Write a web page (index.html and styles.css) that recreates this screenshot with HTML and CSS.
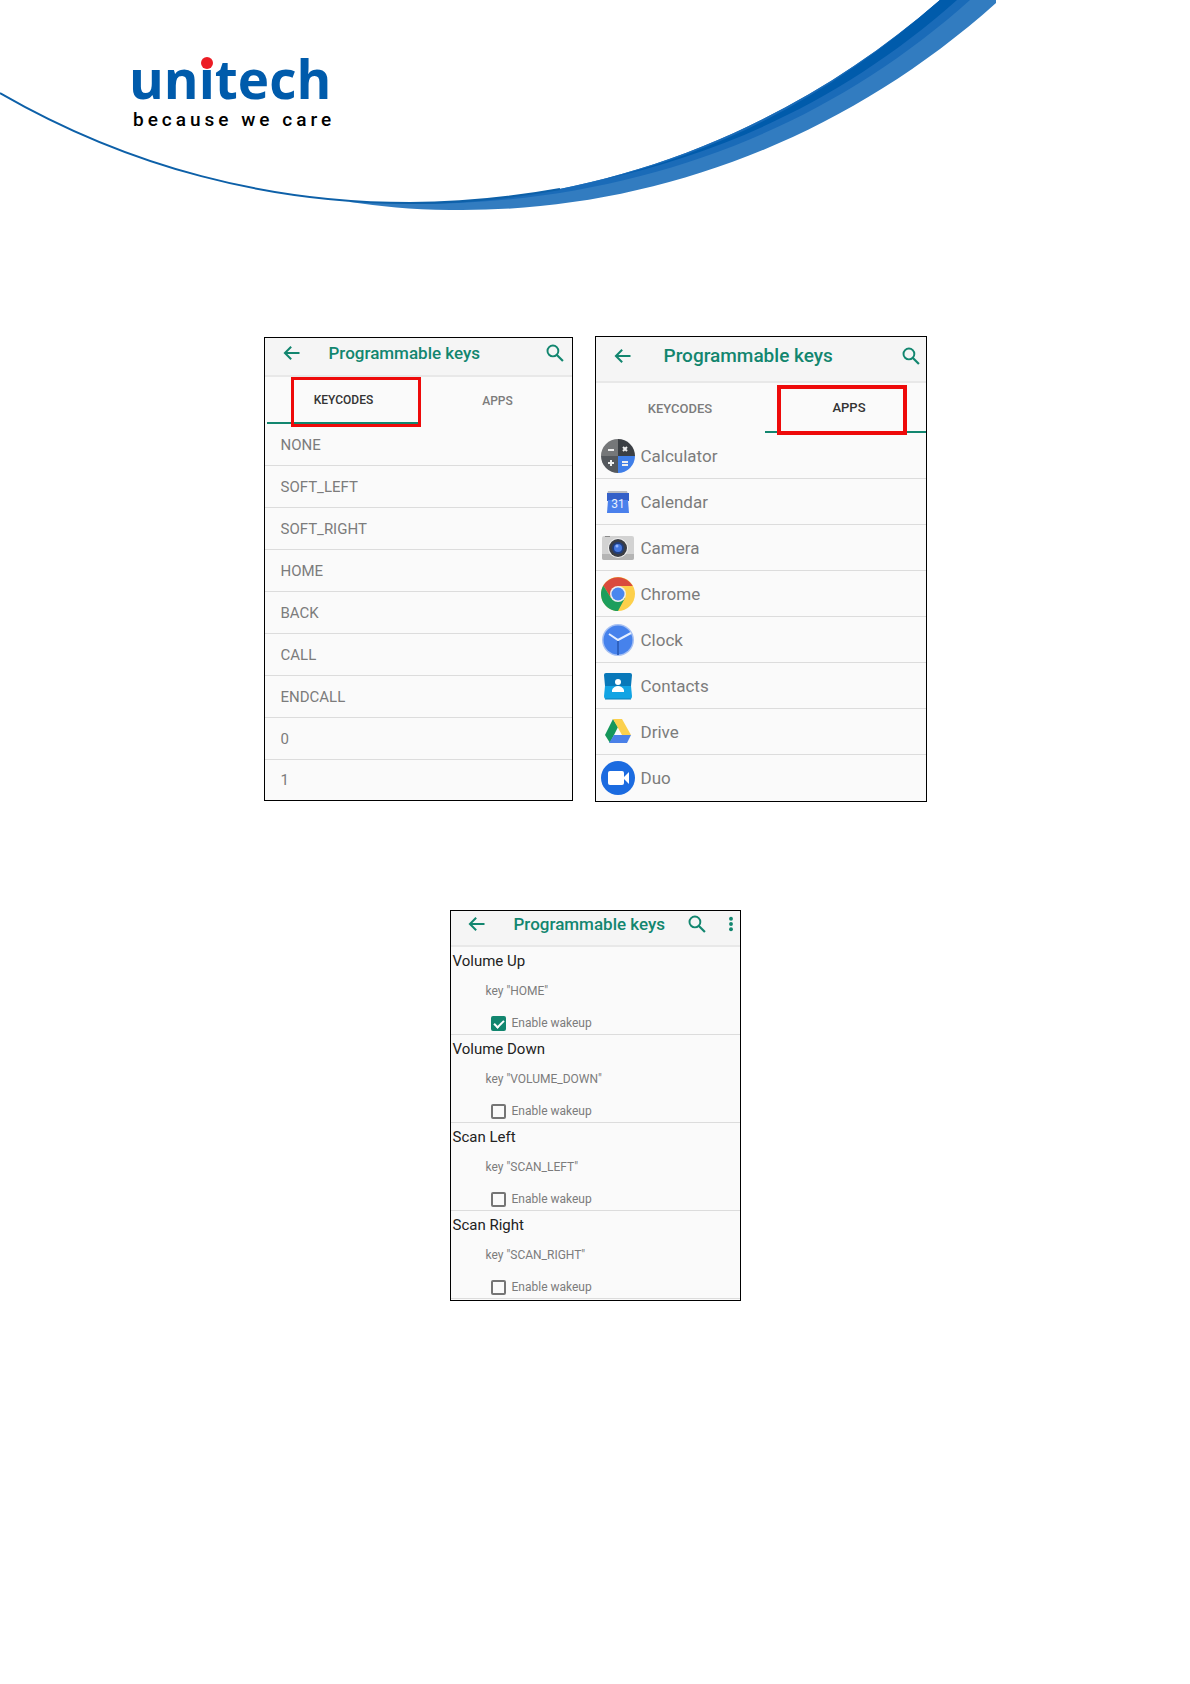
FILE: index.html
```html
<!DOCTYPE html>
<html lang="en">
<head>
  <meta charset="UTF-8" />
  <meta name="viewport" content="width=device-width, initial-scale=1.0"/>
  <title>Programmable keys</title>
  <link rel="stylesheet" href="styles.css">
</head>
<body>

  <!-- shared icons -->
  <svg class="sprite" aria-hidden="true">
    <symbol id="back" viewBox="0 0 24 24">
      <path d="M21 12H4M11 4.500L3.500 12L11 19.500" fill="none" stroke="currentColor" stroke-width="2.400"/>
    </symbol>
    <symbol id="search" viewBox="0 0 24 24">
      <circle cx="9.500" cy="9.500" r="6.500" fill="none" stroke="currentColor" stroke-width="2.300"/>
      <path d="M14 14L21.500 21.500" fill="none" stroke="currentColor" stroke-width="2.600"/>
    </symbol>
    <symbol id="more" viewBox="0 0 6 24">
      <circle cx="3" cy="5" r="2.600" fill="currentColor"/>
      <circle cx="3" cy="12" r="2.600" fill="currentColor"/>
      <circle cx="3" cy="19" r="2.600" fill="currentColor"/>
    </symbol>
  </svg>

  <header>
    <svg class="swoosh" viewBox="0 0 1190 220" aria-hidden="true">
      <path fill="#327cc0" d="M350 201C370 202 390 203 410 203C600 205 790 131 940 0H996V3C836 146 640 213 450 210C410 210 380 206 350 202Z"/>
      <path fill="#1a6bb8" d="M410 203C600 205 790 131 940 0H970C815 139 620 205 410 204Z"/>
      <path fill="#005bab" d="M600 180C730 150 840 88 940 0H957C850 95 730 152 600 180Z"/>
      <path fill="none" stroke="#0d60a8" stroke-width="2" d="M0 93C130 168 270 203 410 203C460 203 510 198 560 189"/>
    </svg>
    <div class="brand">
      <div class="logo">un<span>i</span>tech</div>
      <div class="tagline">because we care</div>
    </div>
  </header>

  <main>
    <div class="screens">

      <section class="screen keycodes">
        <div class="bar">
          <button class="back" aria-label="Back"><svg><use href="#back"/></svg></button>
          <h2>Programmable keys</h2>
          <button aria-label="Search"><svg><use href="#search"/></svg></button>
        </div>
        <div class="tabs">
          <button class="active">KEYCODES</button>
          <button>APPS</button>
        </div>
        <ul>
          <li>NONE</li>
          <li>SOFT_LEFT</li>
          <li>SOFT_RIGHT</li>
          <li>HOME</li>
          <li>BACK</li>
          <li>CALL</li>
          <li>ENDCALL</li>
          <li>0</li>
          <li>1</li>
        </ul>
      </section>

      <section class="screen apps">
        <div class="bar">
          <button class="back" aria-label="Back"><svg><use href="#back"/></svg></button>
          <h2>Programmable keys</h2>
          <button aria-label="Search"><svg><use href="#search"/></svg></button>
        </div>
        <div class="tabs">
          <button>KEYCODES</button>
          <button class="active">APPS</button>
        </div>
        <ul>
          <li>
            <svg viewBox="0 0 34 34">
              <path fill="#757779" d="M17 17V0A17 17 0 0 0 0 17Z"/>
              <path fill="#3b3f44" d="M17 17H34A17 17 0 0 0 17 0Z"/>
              <path fill="#54585d" d="M17 17H0A17 17 0 0 0 17 34Z"/>
              <path fill="#3f7ee8" d="M17 17V34A17 17 0 0 0 34 17Z"/>
              <path stroke="#eee" stroke-width="2" d="M7 11H13M22 8L26 12M26 8L22 12M7 24H13M10 21V27M21 23H27M21 26H27"/>
            </svg>
            Calculator
          </li>
          <li>
            <svg viewBox="0 0 34 34">
              <path fill="#b9bcc2" d="M7 6H26L27 9H6Z"/>
              <path fill="#3460c8" d="M6 8H28V16H6Z"/>
              <path fill="#4a80ec" d="M7 15H27L28 28H6Z"/>
              <text x="17" y="23" class="day">31</text>
            </svg>
            Calendar
          </li>
          <li>
            <svg viewBox="0 0 34 34">
              <rect x="1" y="5" width="32" height="24" rx="2" fill="#d2d2d2"/>
              <path fill="#b4b4b4" d="M1 23H33V27A2 2 0 0 1 31 29H3A2 2 0 0 1 1 27Z"/>
              <path fill="#8b8b8b" d="M4 5H9V6H4Z"/>
              <circle cx="17" cy="17" r="10" fill="#f0f0f0"/>
              <circle cx="17" cy="17" r="9" fill="#3a3d45"/>
              <circle cx="17" cy="17" r="6" fill="#203d7c"/>
              <circle cx="17" cy="17" r="4" fill="#4477e0"/>
              <circle cx="16" cy="15" r="1.500" fill="#94b6ff"/>
            </svg>
            Camera
          </li>
          <li>
            <svg viewBox="0 0 34 34">
              <circle cx="17" cy="17" r="17" fill="#fdd04b"/>
              <path fill="#d94b3d" d="M2.300 8.500A17 17 0 0 1 31.700 9H17L10 21Z"/>
              <path fill="#1d9e5c" d="M2.300 8.500A17 17 0 0 0 17 34L24 21L10 21Z"/>
              <circle cx="17" cy="17" r="8" fill="#f0f0ee"/>
              <circle cx="17" cy="17" r="6.500" fill="#4a87ee"/>
            </svg>
            Chrome
          </li>
          <li>
            <svg viewBox="0 0 34 34">
              <circle cx="17" cy="17" r="16" fill="#a6c0f3"/>
              <circle cx="17" cy="17" r="14.500" fill="#4682ec"/>
              <path fill="none" stroke="#e6efff" stroke-width="2" d="M8 11L17 17L30 10"/>
              <path stroke="#2e61bf" stroke-width="2" d="M17 18V32"/>
            </svg>
            Clock
          </li>
          <li>
            <svg viewBox="0 0 34 34">
              <path fill="#0878b9" d="M5 4H29Q31 4 31 6L30 17H4L3 6Q3 4 5 4Z"/>
              <path fill="#12a4e4" d="M4 17H30L31 27Q31 30 29 30H5Q3 30 3 27Z"/>
              <path stroke="#087eb9" d="M4 30H30"/>
              <circle cx="17" cy="13" r="3" fill="#fff"/>
              <path fill="#fff" d="M11 23V21Q13 17 17 17T23 21V23Z"/>
            </svg>
            Contacts
          </li>
          <li>
            <svg viewBox="0 0 34 34">
              <path fill="#15975b" d="M12 4L17 12L9 28L4 20Z"/>
              <path fill="#fbd04d" d="M12 4H21L30 20H21Z"/>
              <path fill="#4a80e8" d="M13 20H30L26 28H8Z"/>
            </svg>
            Drive
          </li>
          <li>
            <svg viewBox="0 0 34 34">
              <circle cx="17" cy="17" r="17" fill="#1b6be0"/>
              <rect x="7" y="10" width="16" height="14" rx="2" fill="#fff"/>
              <path fill="#fff" d="M23 16L28 11V23L23 18Z"/>
            </svg>
            Duo
          </li>
        </ul>
      </section>

    </div>

    <section class="screen wakeup">
      <div class="bar">
        <button class="back" aria-label="Back"><svg><use href="#back"/></svg></button>
        <h2>Programmable keys</h2>
        <button aria-label="Search"><svg><use href="#search"/></svg></button>
        <button class="more" aria-label="More options"><svg><use href="#more"/></svg></button>
      </div>
      <div class="key">
        <h3>Volume Up</h3>
        <p>key "HOME"</p>
        <label><input type="checkbox" checked> Enable wakeup</label>
      </div>
      <div class="key">
        <h3>Volume Down</h3>
        <p>key "VOLUME_DOWN"</p>
        <label><input type="checkbox"> Enable wakeup</label>
      </div>
      <div class="key">
        <h3>Scan Left</h3>
        <p>key "SCAN_LEFT"</p>
        <label><input type="checkbox"> Enable wakeup</label>
      </div>
      <div class="key">
        <h3>Scan Right</h3>
        <p>key "SCAN_RIGHT"</p>
        <label><input type="checkbox"> Enable wakeup</label>
      </div>
    </section>
  </main>

</body>
</html>
```
FILE: styles.css
```css
:root {
  --brand-blue: #005bab;
  --teal: #12866f;
  --line: #dcdcdc;
  --grey: #7c7c7c;
  --mark: #ee0a0a;
}

*,
*::before,
*::after {
  box-sizing: border-box;
}

body {
  font-family: Roboto, sans-serif;
  background-color: white;
  margin: 0;
}

.sprite {
  position: absolute;
  width: 0;
  height: 0;
}

header {
  position: relative;
  min-height: 220px;
  padding: 48px 0 0 129px;
}

.swoosh {
  position: absolute;
  top: 0;
  left: 0;
  width: 100%;
}

.brand {
  position: relative;
}

.logo {
  font-family: 'Open Sans', sans-serif;
  font-size: 53px;
  font-weight: bold;
  line-height: 62px;
  color: var(--brand-blue);
}

.logo span {
  position: relative;
}

/* red dot over the i */
.logo span::before {
  content: '';
  position: absolute;
  top: 15px;
  left: 2px;
  width: 12px;
  height: 12px;
  border-radius: 50%;
  background-color: #ec1c24;
}

.tagline {
  font-size: 19px;
  font-weight: 500;
  line-height: 20px;
  letter-spacing: 4px;
  padding-left: 4px;
  color: #000;
}

main {
  display: flex;
  flex-direction: column;
  align-items: center;
  gap: 108px;
  padding: 116px 0 40px;
}

.screens {
  display: flex;
  flex-wrap: wrap;
  justify-content: center;
  align-items: center;
  gap: 22px;
}

.screen {
  border: 1px solid #000;
  background-color: #fafafa;
  overflow: hidden;
}

.keycodes {
  width: 309px;
}

.apps {
  width: 332px;
}

.wakeup {
  width: 291px;
  padding-bottom: 1px;
}

button {
  border: 0;
  padding: 0;
  background: none;
  font-family: inherit;
  color: inherit;
}

/* title bar */
.bar {
  display: flex;
  align-items: center;
  height: 39px;
  padding: 0 7px 8px 17px;
  background-color: #f5f5f5;
  border-bottom: 2px solid #e8e8e8;
  color: var(--teal);
}

.bar svg {
  display: block;
  width: 20px;
  height: 20px;
}

.bar h2 {
  flex: 1;
  margin: 0 0 0 27px;
  font-size: 17px;
  font-weight: 500;
  line-height: 22px;
}

.apps .bar {
  height: 46px;
  padding-right: 5px;
  padding-bottom: 6px;
}

.apps .bar h2 {
  margin-left: 31px;
  font-size: 19px;
}

.wakeup .bar {
  height: 36px;
  padding-left: 16px;
  padding-right: 5px;
}

.bar .more {
  margin-left: 20px;
}

.bar .more svg {
  width: 8px;
  height: 18px;
}

/* tabs */
.tabs {
  display: grid;
  grid-template-columns: 154px 154px;
  height: 47px;
  padding-left: 2px;
}

.tabs button {
  position: relative;
  font-size: 12px;
  font-weight: 500;
  color: var(--grey);
}

.tabs .active {
  color: #333;
  border-bottom: 2px solid var(--teal);
}

.tabs .active::after {
  content: '';
  position: absolute;
  top: 0;
  left: 24px;
  width: 130px;
  height: 50px;
  border: 3px solid var(--mark);
  z-index: 1;
}

.apps .tabs {
  grid-template-columns: 169px 169px;
  height: 50px;
  padding-left: 0;
}

.apps .tabs button {
  font-size: 13px;
}

.apps .tabs .active::after {
  top: 2px;
  left: 12px;
  border-width: 4px;
}

/* lists */
ul {
  list-style: none;
  margin: 0;
  padding: 0;
}

li {
  display: flex;
  align-items: center;
  height: 42px;
  padding-left: 16px;
  border-bottom: 1px solid var(--line);
  font-size: 15px;
  color: var(--grey);
}

.keycodes li:last-child {
  height: 40px;
}

li:last-child {
  border-bottom: 0;
}

.apps li {
  height: 46px;
  padding-left: 5px;
  gap: 6px;
  font-size: 17px;
}

.apps li svg {
  width: 34px;
  height: 34px;
}

.day {
  font-size: 12px;
  fill: #e8f0ff;
  text-anchor: middle;
}

/* key settings */
.key {
  height: 88px;
  padding: 4px 0 0 2px;
  border-bottom: 1px solid var(--line);
}

.key h3 {
  margin: 0;
  font-size: 15px;
  font-weight: 400;
  line-height: 20px;
  color: #222;
}

.key p {
  margin: 10px 0 12px 33px;
  font-size: 12px;
  line-height: 20px;
  color: var(--grey);
}

.key label {
  display: flex;
  align-items: center;
  gap: 6px;
  margin-left: 38px;
  font-size: 12px;
  line-height: 20px;
  color: var(--grey);
}

.key input {
  appearance: none;
  width: 15px;
  height: 15px;
  margin: 0;
  border: 2px solid #757575;
  border-radius: 2px;
}

.key input:checked {
  position: relative;
  border-color: var(--teal);
  background-color: var(--teal);
}

.key input:checked::after {
  content: '';
  position: absolute;
  top: 0;
  left: 3px;
  width: 6px;
  height: 10px;
  border: solid #fff;
  border-width: 0 2px 2px 0;
  transform: rotate(45deg);
}
```
